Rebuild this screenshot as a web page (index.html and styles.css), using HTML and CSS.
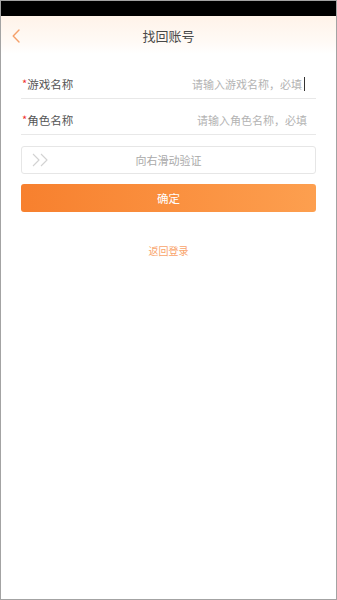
FILE: index.html
```html
<!DOCTYPE html>
<html lang="zh">
<head>
<meta charset="utf-8">
<title>找回账号</title>
<link rel="stylesheet" href="styles.css">
</head>
<body>
<div class="frame">
  <div class="statusbar"></div>
  <div class="header">
    <span class="back">
      <svg width="8" height="14" viewBox="0 0 8 14"><path d="M7 1 L1.2 7 L7 13" fill="none" stroke="#f5a06a" stroke-width="1.4" stroke-linecap="round" stroke-linejoin="round"/></svg>
    </span>
    <span class="title">找回账号</span>
  </div>
  <div class="form">
    <div class="row">
      <span class="label"><span class="star">*</span>游戏名称</span>
      <span class="ph ph-focus">请输入游戏名称，必填<span class="caret"></span></span>
    </div>
    <div class="row">
      <span class="label"><span class="star">*</span>角色名称</span>
      <span class="ph">请输入角色名称，必填</span>
    </div>
    <div class="slider">
      <span class="handle">
        <svg width="17" height="14" viewBox="0 0 17 14"><path d="M1 1 L7 7 L1 13 M9 1 L15 7 L9 13" fill="none" stroke="#d2d2d2" stroke-width="1.1" stroke-linejoin="round"/></svg>
      </span>
      <span class="slider-text">向右滑动验证</span>
    </div>
    <div class="btn">确定</div>
    <div class="link">返回登录</div>
  </div>
</div>
</body>
</html>
```
FILE: styles.css
```css
html, body {
  margin: 0;
  padding: 0;
  background: #fff;
}
.frame {
  width: 337px;
  height: 600px;
  box-sizing: border-box;
  border: 1px solid #a3a3a3;
  font-family: "Noto Sans CJK SC", "Noto Sans", sans-serif;
  overflow: hidden;
  background: #fff;
}
.statusbar {
  height: 15px;
  background: #000;
}
.header {
  position: relative;
  height: 38px;
  display: flex;
  align-items: center;
  justify-content: center;
  background: linear-gradient(to bottom, #fff3e9, #fffaf6 70%, #ffffff);
}
.back {
  position: absolute;
  left: 11px;
  top: 13px;
  width: 8px;
  height: 14px;
  display: flex;
}
.title {
  font-size: 13px;
  font-weight: 400;
  color: #484848;
  line-height: 38px;
  margin-top: 2px;
}
.form {
  padding: 9px 20px 0;
}
.row {
  height: 36px;
  box-sizing: border-box;
  padding: 6px 9px 0 0;
  border-bottom: 1px solid #e8e8e8;
  display: flex;
  align-items: center;
  justify-content: space-between;
}
.label {
  font-size: 11.5px;
  color: #555;
  display: flex;
  align-items: center;
}
.star {
  color: #f0302e;
  font-size: 11px;
  margin-left: 1px;
  position: relative;
  top: -1px;
}
.ph {
  font-size: 11px;
  color: #b3b3b3;
  display: flex;
  align-items: center;
}
.ph-focus {
  margin-right: 2px;
}
.caret {
  display: inline-block;
  width: 1px;
  height: 14px;
  background: #333;
  margin-left: 2px;
}
.slider {
  margin-top: 11px;
  height: 28px;
  box-sizing: border-box;
  border: 1px solid #e6e6e6;
  border-radius: 3px;
  display: flex;
  align-items: center;
  position: relative;
}
.handle {
  position: absolute;
  left: 10px;
  top: 6px;
  display: flex;
}
.slider-text {
  flex: 1;
  text-align: center;
  font-size: 11px;
  color: #a9a9a9;
}
.btn {
  margin-top: 10px;
  height: 28px;
  border-radius: 3px;
  background: linear-gradient(to right, #f7802e, #fd9f4f);
  color: #fff;
  font-size: 11.5px;
  display: flex;
  align-items: center;
  justify-content: center;
}
.link {
  margin-top: 32px;
  text-align: center;
  font-size: 10px;
  line-height: 14px;
  color: #f9a46b;
}
```
